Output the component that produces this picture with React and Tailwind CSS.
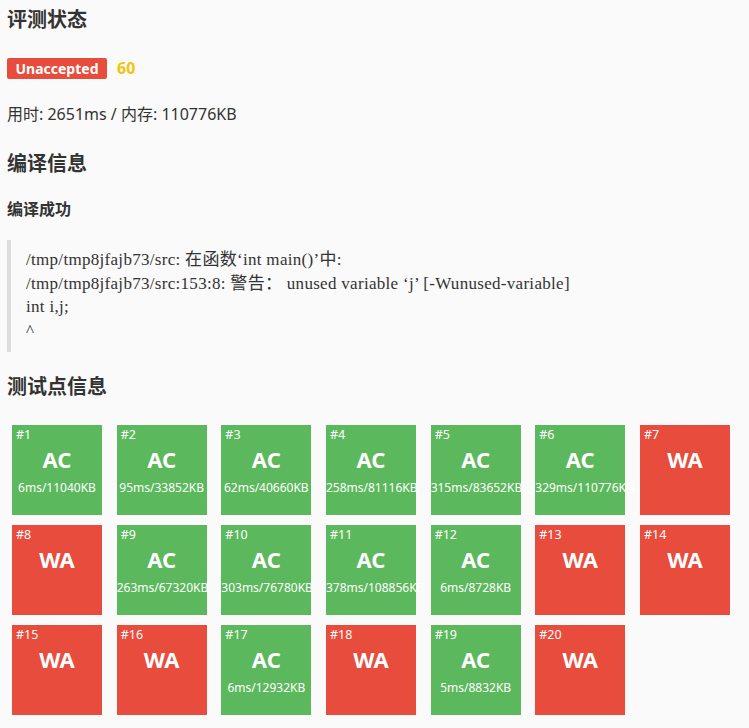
import React from "react";

const cases = [
  ["AC", "6ms/11040KB"],
  ["AC", "95ms/33852KB"],
  ["AC", "62ms/40660KB"],
  ["AC", "258ms/81116KB"],
  ["AC", "315ms/83652KB"],
  ["AC", "329ms/110776KB"],
  ["WA", ""],
  ["WA", ""],
  ["AC", "263ms/67320KB"],
  ["AC", "303ms/76780KB"],
  ["AC", "378ms/108856KB"],
  ["AC", "6ms/8728KB"],
  ["WA", ""],
  ["WA", ""],
  ["WA", ""],
  ["WA", ""],
  ["AC", "6ms/12932KB"],
  ["WA", ""],
  ["AC", "5ms/8832KB"],
  ["WA", ""],
];

const sans = { fontFamily: '"Noto Sans", "Noto Sans CJK SC", sans-serif' };

export default function App() {
  return (
    <div
      className="min-h-screen bg-[#fafafa] text-[#333] px-[7px] pt-[6px] pb-4"
      style={sans}
    >
      <h2 className="text-[20px] font-bold leading-[28px] text-[#333]">评测状态</h2>
      <div className="mt-[24px] flex items-center h-[21px]">
        <span className="inline-flex items-center justify-center w-[100px] h-[21px] rounded-[2px] bg-[#e74c3c] text-white text-[14px] font-bold">
          Unaccepted
        </span>
        <span className="ml-[10px] text-[#f1c40f] text-[16px] font-bold leading-[20px] -mt-[2px]">60</span>
      </div>
      <div className="mt-[23px] text-[16px] leading-[24px]">用时: 2651ms / 内存: 110776KB</div>
      <h2 className="mt-[24px] text-[20px] font-bold leading-[28px]">编译信息</h2>
      <h3 className="mt-[19px] text-[16px] font-bold leading-[24px]">编译成功</h3>
      <blockquote
        className="mt-[19px] border-l-4 border-[#dddddd] pl-[15px] pt-[8px] pb-[10px] text-[17px] leading-[23.5px] tracking-[0.3px] text-[#333]"
        style={{ fontFamily: '"Liberation Serif", "Noto Sans CJK SC", serif' }}
      >
        <div>/tmp/tmp8jfajb73/src: 在函数‘int main()’中:</div>
        <div>/tmp/tmp8jfajb73/src:153:8: 警告： unused variable ‘j’ [-Wunused-variable]</div>
        <div>int i,j;</div>
        <div>^</div>
      </blockquote>
      <h2 className="mt-[21px] text-[20px] font-bold leading-[28px]">测试点信息</h2>
      <div className="mt-[24px] ml-[5px] flex flex-wrap gap-x-[14.67px] gap-y-[10px] w-[720px]">
        {cases.map(([st, info], i) => (
          <div
            key={i}
            className={`w-[90px] h-[90px] text-white ${st === "AC" ? "bg-[#5cb85c]" : "bg-[#e74c3c]"}`}
          >
            <div className="text-[12.5px] leading-[16px] pl-[4px] pt-[2px]">#{i + 1}</div>
            <div className="text-center text-[22px] font-bold leading-[28px] mt-[2px]">{st}</div>
            <div className="text-center text-[12px] leading-[16px] mt-[7px] whitespace-nowrap">{info}</div>
          </div>
        ))}
      </div>
    </div>
  );
}
